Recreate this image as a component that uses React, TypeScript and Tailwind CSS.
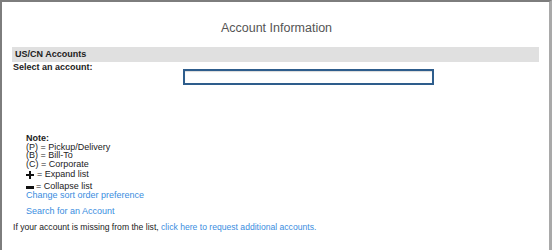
import React from "react";

export default function App() {
  return (
    <div
      className="w-[552px] h-[250px] bg-white border-l-2 border-t-2 border-r-[3px] border-l-[#7d7d7d] border-t-[#7d7d7d] border-r-[#a9a9a9] overflow-hidden text-[#222]"
      style={{ fontFamily: '"Liberation Sans", Arial, sans-serif' }}
    >
      <div className="pt-[18px] text-center text-[12.5px] leading-[16px] text-[#555] pl-[2px]">
        Account Information
      </div>
      <div className="mt-[11px] ml-[10px] mr-[10px] h-[15px] bg-[#e0e0e0] flex items-center pl-[3px]">
        <span className="text-[9px] font-bold leading-none">US/CN Accounts</span>
      </div>
      <div className="ml-[11px] text-[9px] font-bold leading-[10px]">Select an account:</div>
      <div className="ml-[181px] mt-[-3px] w-[251px] h-[16px] border-2 border-[#2e5d8c] bg-white shadow-[inset_0_1px_1px_rgba(0,0,0,0.15)]"></div>
      <div className="ml-[24px] mt-[49px] text-[9px] leading-[8.5px]">
        <div className="font-bold">Note:</div>
        <div>(P) = Pickup/Delivery</div>
        <div>(B) = Bill-To</div>
        <div>(C) = Corporate</div>
        <div className="flex items-center mt-[2px] h-[9px]">
          <svg width="8" height="8" viewBox="0 0 8 8" className="mr-[3px]">
            <path d="M3 0h2v3h3v2H5v3H3V5H0V3h3z" fill="#111" />
          </svg>
          <span>= Expand list</span>
        </div>
        <div className="flex items-center mt-[3px] h-[9px]">
          <svg width="8" height="8" viewBox="0 0 8 8" className="mr-[2px]">
            <rect x="0" y="3" width="8" height="3" fill="#111" />
          </svg>
          <span>= Collapse list</span>
        </div>
        <div className="text-[#3a8de0]">Change sort order preference</div>
        <div className="text-[#3a8de0] mt-[6px] leading-[10px]">Search for an Account</div>
      </div>
      <div className="ml-[11px] mt-[6px] text-[8.6px] leading-[10px]">
        If your account is missing from the list,{" "}
        <span className="text-[#3a8de0]">click here to request additional accounts.</span>
      </div>
    </div>
  );
}
